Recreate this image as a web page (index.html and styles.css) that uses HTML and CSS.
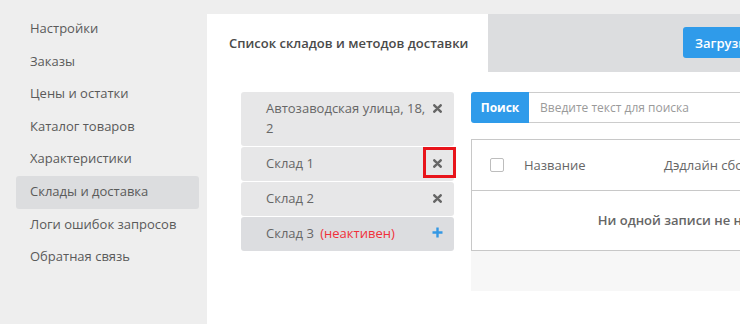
FILE: index.html
```html
<!DOCTYPE html>
<html lang="ru">
<head>
<meta charset="utf-8">
<link rel="stylesheet" href="styles.css">
</head>
<body>
<div class="page">
  <nav class="sidebar">
    <div class="nav-item">Настройки</div>
    <div class="nav-item">Заказы</div>
    <div class="nav-item">Цены и остатки</div>
    <div class="nav-item">Каталог товаров</div>
    <div class="nav-item">Характеристики</div>
    <div class="nav-item active">Склады и доставка</div>
    <div class="nav-item">Логи ошибок запросов</div>
    <div class="nav-item">Обратная связь</div>
  </nav>
  <main class="main">
    <div class="header">
      <div class="tab">Список складов и методов доставки</div>
      <div class="header-fill">
        <button class="upload-btn">Загрузить</button>
      </div>
    </div>
    <div class="content">
      <div class="stores">
        <div class="store">
          <span class="store-name">Автозаводская улица, 18, 2</span>
          <svg class="icon-x" viewBox="0 0 9 9" width="9" height="9"><path d="M1.3 1.3L7.7 7.7M7.7 1.3L1.3 7.7" stroke="#666" stroke-width="2.5" stroke-linecap="round"/></svg>
        </div>
        <div class="store highlighted">
          <span class="store-name">Склад 1</span>
          <svg class="icon-x" viewBox="0 0 9 9" width="9" height="9"><path d="M1.3 1.3L7.7 7.7M7.7 1.3L1.3 7.7" stroke="#666" stroke-width="2.5" stroke-linecap="round"/></svg>
          <span class="highlight-box"></span>
        </div>
        <div class="store">
          <span class="store-name">Склад 2</span>
          <svg class="icon-x" viewBox="0 0 9 9" width="9" height="9"><path d="M1.3 1.3L7.7 7.7M7.7 1.3L1.3 7.7" stroke="#666" stroke-width="2.5" stroke-linecap="round"/></svg>
        </div>
        <div class="store inactive">
          <span class="store-name">Склад 3 <span class="inactive-label">(неактивен)</span></span>
          <svg class="icon-plus" viewBox="0 0 11 11" width="11" height="11"><path d="M5.5 0.5V10.5M0.5 5.5H10.5" stroke="#3498e4" stroke-width="2.4"/></svg>
        </div>
      </div>
      <div class="right">
        <div class="search">
          <button class="search-btn">Поиск</button>
          <div class="search-input">Введите текст для поиска</div>
        </div>
        <div class="table">
          <div class="thead">
            <div class="cell-check"><span class="checkbox"></span></div>
            <div class="th">Название</div>
            <div class="th">Дэдлайн сборки</div>
          </div>
          <div class="empty">Ни одной записи не найдено</div>
        </div>
        <div class="table-footer"></div>
      </div>
    </div>
  </main>
</div>
</body>
</html>
```

FILE: styles.css
```css
* { box-sizing: border-box; }
html, body {
  margin: 0;
  padding: 0;
  background: #eeeeee;
  overflow: hidden;
  font-family: "Open Sans", "Liberation Sans", sans-serif;
}
.page {
  display: flex;
  width: 960px;
  height: 324px;
}
.sidebar {
  width: 207px;
  flex: none;
  padding: 13px 8px 0 16px;
}
.nav-item {
  height: 32.6px;
  line-height: 30px;
  padding: 0 0 2.6px 14px;
  font-size: 13px;
  color: #5a5a5a;
  border-radius: 3px;
}
.nav-item.active {
  background: #dcdddf;
}
.main {
  margin-top: 14px;
  width: 744px;
  flex: none;
  background: #ffffff;
}
.header {
  display: flex;
  height: 58px;
}
.tab {
  width: 281px;
  padding-left: 22px;
  line-height: 58px;
  font-size: 13px;
  font-weight: 600;
  color: #4a4a4a;
  background: #ffffff;
}
.header-fill {
  flex: 1;
  background: #dcdddf;
  display: flex;
  align-items: flex-start;
  padding-top: 13px;
  padding-left: 195px;
}
.upload-btn {
  height: 31px;
  padding: 0 12px;
  border: none;
  border-radius: 3px;
  background: #2f9bea;
  color: #ffffff;
  font-family: inherit;
  font-size: 13px;
  font-weight: 600;
}
.content {
  display: flex;
  padding: 20px 0 0 34px;
  gap: 17px;
}
.stores {
  width: 213px;
  flex: none;
  display: flex;
  flex-direction: column;
  gap: 1px;
}
.store {
  position: relative;
  display: flex;
  align-items: flex-start;
  justify-content: space-between;
  padding: 6px 12px 8px 25px;
  background: #e7e7e8;
  border-radius: 3px;
  font-size: 13px;
  line-height: 20px;
  color: #666666;
}
.store.inactive {
  background: #dcdde0;
}
.store-name {
  max-width: 160px;
}
.inactive-label {
  color: #f0303a;
  margin-left: 3px;
}
.icon-x {
  margin-top: 6px;
  flex: none;
}
.icon-plus {
  margin-top: 4px;
  margin-right: -1px;
  flex: none;
}
.highlight-box {
  position: absolute;
  left: 182px;
  top: 0;
  width: 33px;
  height: 31px;
  border: 3px solid #e8141b;
}
.right {
  width: 446px;
  flex: none;
}
.search {
  display: flex;
  height: 31px;
}
.search-btn {
  width: 58px;
  border: none;
  border-radius: 3px 0 0 3px;
  background: #2f9bea;
  color: #ffffff;
  font-family: inherit;
  font-size: 12px;
  font-weight: 700;
  padding: 0;
}
.search-input {
  flex: 1;
  border: 1px solid #cccccc;
  border-left: none;
  padding-left: 11px;
  line-height: 29px;
  font-size: 12px;
  color: #9a9a9a;
}
.table {
  margin-top: 16px;
  border: 1px solid #c8c8c8;
}
.thead {
  display: grid;
  grid-template-columns: 52px 140px 1fr;
  align-items: center;
  height: 51px;
  border-bottom: 1px solid #c8c8c8;
  font-size: 13px;
  color: #666666;
}
.cell-check {
  padding-left: 18px;
  display: flex;
}
.checkbox {
  width: 14px;
  height: 14px;
  border: 1px solid #bdbdbd;
  border-radius: 2px;
  background: #fff;
}
.th {
  white-space: nowrap;
}
.empty {
  height: 59px;
  line-height: 59px;
  text-align: center;
  font-size: 13px;
  font-weight: 600;
  color: #666666;
}
.table-footer {
  height: 40px;
  background: #f7f7f7;
}
```
